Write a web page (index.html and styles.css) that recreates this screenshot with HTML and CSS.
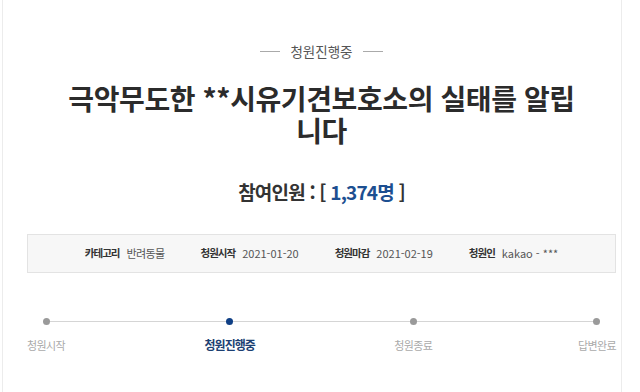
FILE: index.html
```html
<!DOCTYPE html>
<html lang="ko">
<head>
    <meta charset="UTF-8">
    <meta name="viewport" content="width=device-width, initial-scale=1.0">
    <title>청원 상세</title>
    <link rel="stylesheet" href="styles.css">
</head>
<body>
    <div class="page">
        <div class="status">
            <span class="status-line"></span>
            <span class="status-text">청원진행중</span>
            <span class="status-line"></span>
        </div>

        <h1 class="title">극악무도한 **시유기견보호소의 실태를 알립니다</h1>

        <p class="count">참여인원 : [ <span class="count-num">1,374명</span> ]</p>

        <ul class="info">
            <li><span class="info-label">카테고리</span><span class="info-value kr">반려동물</span></li>
            <li><span class="info-label">청원시작</span><span class="info-value">2021-01-20</span></li>
            <li><span class="info-label">청원마감</span><span class="info-value">2021-02-19</span></li>
            <li><span class="info-label">청원인</span><span class="info-value">kakao - ***</span></li>
        </ul>

        <ol class="steps">
            <li class="step"><span class="dot"></span><span class="step-name">청원시작</span></li>
            <li class="step active"><span class="dot"></span><span class="step-name">청원진행중</span></li>
            <li class="step"><span class="dot"></span><span class="step-name">청원종료</span></li>
            <li class="step"><span class="dot"></span><span class="step-name">답변완료</span></li>
        </ol>
    </div>
</body>
</html>
```

FILE: styles.css
```css
body {
    margin: 0;
    background-color: #fff;
    font-family: "Noto Sans CJK KR", "Noto Sans", sans-serif;
    color: #333;
}

.page {
    margin-left: 2px;
    width: 620px;
    min-height: 392px;
    box-sizing: border-box;
    padding: 41px 5px 0 24px;
    border-left: 1px solid #ececec;
    border-right: 1px solid #ececec;
}

/* 상단 상태 표시 */
.status {
    display: flex;
    justify-content: center;
    align-items: center;
    gap: 10px;
    font-size: 13.5px;
    line-height: 20px;
    color: #555;
}

.status-line {
    width: 20px;
    height: 1px;
    background-color: #aaa;
}

.title {
    margin: 21px auto 0;
    width: 512px;
    font-size: 28px;
    line-height: 32px;
    font-weight: bold;
    text-align: center;
    color: #2b2b2b;
    letter-spacing: -0.4px;
}

.count {
    margin: 33px 0 0;
    font-size: 19px;
    line-height: 26px;
    font-weight: bold;
    text-align: center;
    color: #333;
    letter-spacing: -0.8px;
}

.count-num {
    color: #1d4f91;
}

/* 청원 정보 박스 */
.info {
    list-style: none;
    margin: 29px 0 0;
    padding: 10px 0 11px;
    display: flex;
    justify-content: center;
    gap: 36px;
    background-color: #f7f7f7;
    border: 1px solid #e3e3e3;
    font-size: 11px;
    line-height: 16px;
}

.info li {
    display: flex;
    gap: 7px;
}

.info-label {
    font-size: 10.5px;
    font-weight: bold;
    color: #333;
    letter-spacing: -1px;
}

.info-value {
    color: #555;
}

.info-value.kr {
    letter-spacing: -0.6px;
}

/* 진행 단계 */
.steps {
    list-style: none;
    margin: 45px -11px 0 -11px;
    padding: 0;
    position: relative;
    display: flex;
    justify-content: space-between;
}

.steps::before {
    content: "";
    position: absolute;
    top: 3px;
    left: 30px;
    right: 30px;
    height: 1px;
    background-color: #d5d5d5;
}

.step {
    width: 60px;
    display: flex;
    flex-direction: column;
    align-items: center;
    position: relative;
}

.dot {
    width: 7px;
    height: 7px;
    border-radius: 50%;
    background-color: #9a9a9a;
}

.step-name {
    margin-top: 12px;
    font-size: 11px;
    line-height: 16px;
    color: #aaa;
    letter-spacing: -0.6px;
    white-space: nowrap;
}

.step.active .dot {
    background-color: #0f3f85;
}

.step.active .step-name {
    font-size: 12px;
    font-weight: bold;
    color: #1c3f72;
    letter-spacing: -1px;
}
```
